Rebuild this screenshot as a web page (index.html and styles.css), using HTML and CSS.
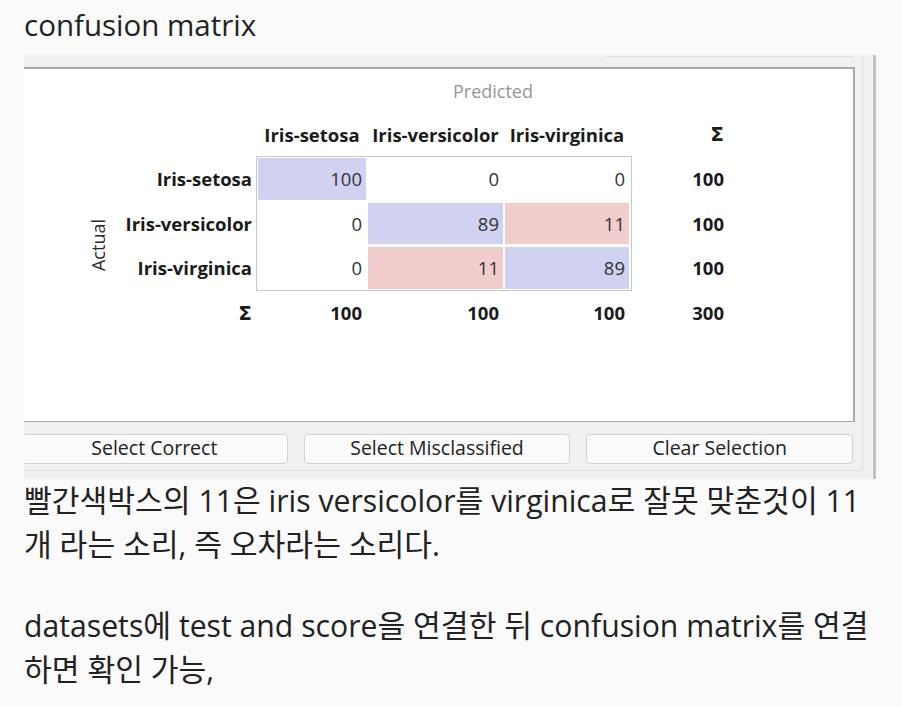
FILE: index.html
```html
<!DOCTYPE html>
<html lang="ko">
<head>
  <meta charset="UTF-8" />
  <meta name="viewport" content="width=device-width, initial-scale=1.0"/>
  <title>confusion matrix</title>
  <link rel="stylesheet" href="styles.css">
</head>
<body>
  <div class="post">
    <p class="post-title">confusion matrix</p>

    <!-- Orange widget screenshot -->
    <div class="shot">
      <div class="frame">
        <div class="shot-top"></div>
        <div class="panel">
          <div class="cm">
            <div class="cm-title">Predicted</div>
            <div class="cm-head">
              <div class="cm-cols">
                <span>Iris-setosa</span>
                <span>Iris-versicolor</span>
                <span>Iris-virginica</span>
              </div>
              <span class="cm-sum sigma">Σ</span>
            </div>
            <div class="cm-main">
              <div class="cm-actual"><span>Actual</span></div>
              <div>
                <div class="cm-body">
                  <div class="cm-rows">
                    <span>Iris-setosa</span>
                    <span>Iris-versicolor</span>
                    <span>Iris-virginica</span>
                  </div>
                  <div class="cm-matrix">
                    <span class="hit">100</span>
                    <span>0</span>
                    <span>0</span>
                    <span>0</span>
                    <span class="hit">89</span>
                    <span class="miss">11</span>
                    <span>0</span>
                    <span class="miss">11</span>
                    <span class="hit">89</span>
                  </div>
                  <div class="cm-totals">
                    <span>100</span>
                    <span>100</span>
                    <span>100</span>
                  </div>
                </div>
                <div class="cm-foot">
                  <span class="cm-label sigma">Σ</span>
                  <div class="cm-cols">
                    <span>100</span>
                    <span>100</span>
                    <span>100</span>
                  </div>
                  <span class="cm-sum">300</span>
                </div>
              </div>
            </div>
          </div>
        </div>
        <div class="btn-row">
          <button>Select Correct</button>
          <button>Select Misclassified</button>
          <button>Clear Selection</button>
        </div>
      </div>
    </div>

    <p class="post-text">빨간색박스의 11은 iris versicolor를 virginica로 잘못 맞춘것이 11개 라는 소리, 즉 오차라는 소리다.</p>
    <p class="post-text">datasets에 test and score을 연결한 뒤 confusion matrix를 연결하면 확인 가능,</p>
  </div>
</body>
</html>
```

FILE: styles.css
```css
body {
  margin: 0;
  background: #fafafa;
  color: #222;
  font-family: "Open Sans", "Noto Sans CJK KR", sans-serif;
}
.post {
  padding: 0 24px;
}
.post-title {
  margin: 3px 0 8px;
  font-size: 29.5px;
  line-height: 44px;
}
.post-text {
  width: 850px;
  margin: 0 0 37px;
  font-size: 30.2px;
  line-height: 44px;
}

/* screenshot of the widget */
.shot {
  width: 839px;
  background: #f0f0f0;
  border-right: 3px solid #c2c2c2;
  padding: 0 10px 8px 0;
  overflow: hidden;
  font-size: 18.5px;
}
.frame {
  border-right: 1px solid #dedede;
  border-bottom: 1px solid #dedede;
  padding: 0 7px 6px 0;
}
.shot-top {
  height: 11px;
}
.shot-top::before {
  content: "";
  display: block;
  height: 1px;
  width: 246px;
  margin: 1px 0 0 583px;
  background: #dcdcdc;
}
.panel {
  background: #fff;
  border-top: 2px solid #a9a9a9;
  border-right: 2px solid #a9a9a9;
  border-bottom: 1px solid #a9a9a9;
  height: 352px;
}
.btn-row {
  display: flex;
  gap: 16px;
  margin: 12px 2px 0 -3px;
}
.btn-row button {
  flex: 1;
  height: 30px;
  background: #fafafa;
  border: 1px solid #d2d2d2;
  border-radius: 4px;
  font: inherit;
  font-size: 19.5px;
  line-height: 26px;
  color: #222;
  padding: 0 0 2px;
}

/* confusion matrix */
.cm {
  margin-left: 62px;
  padding-top: 12px;
  color: #1a1a1a;
}
.cm-title {
  margin-left: 170px;
  width: 474px;
  text-align: center;
  line-height: 20px;
  font-size: 18px;
  color: #969696;
}
.cm-head {
  display: flex;
  align-items: center;
  height: 42px;
  margin: 13px 0 0 170px;
  font-weight: bold;
}
.cm-head span {
  position: relative;
  top: -1px;
}
.cm-cols {
  display: grid;
  grid-template-columns: 108px 135px 124px;
  column-gap: 2px;
  width: 376px;
  padding: 0 3px 0 2px;
  box-sizing: border-box;
}
.cm-head .cm-cols span {
  text-align: center;
  white-space: nowrap;
}
.cm-sum {
  width: 98px;
  text-align: right;
  padding-right: 6px;
  box-sizing: border-box;
}
.sigma {
  font-family: "DejaVu Sans", sans-serif;
  font-size: 20px;
}
.cm-main {
  display: flex;
}
.cm-actual {
  width: 24px;
  display: flex;
  align-items: center;
  justify-content: center;
  color: #2a2a2a;
  font-size: 18px;
}
.cm-actual span {
  writing-mode: vertical-rl;
  transform: rotate(180deg);
}
.cm-body {
  display: flex;
}
.cm-rows,
.cm-totals {
  display: grid;
  grid-template-rows: repeat(3, 41.5px);
  row-gap: 3px;
  padding: 2px 0;
  align-items: center;
  font-weight: bold;
}
.cm-rows {
  width: 146px;
  padding-right: 4px;
  box-sizing: border-box;
  text-align: right;
}
.cm-totals {
  width: 98px;
  padding-right: 6px;
  box-sizing: border-box;
  text-align: right;
}
.cm-matrix {
  display: grid;
  grid-template-columns: 108px 135px 124px;
  grid-auto-rows: 41.5px;
  gap: 3px 2px;
  padding: 1px 2px 1px 1px;
  border: 1px solid #c8c8c8;
  color: #333;
}
.cm-matrix span {
  display: flex;
  align-items: center;
  justify-content: flex-end;
  padding-right: 4px;
}
.cm-matrix .hit {
  background: #d1d1f2;
}
.cm-matrix .miss {
  background: #f2cdcd;
}
.cm-foot {
  display: flex;
  align-items: center;
  height: 44px;
  font-weight: bold;
}
.cm-label {
  width: 146px;
  padding-right: 4px;
  box-sizing: border-box;
  text-align: right;
}
.cm-foot .cm-cols span {
  text-align: right;
  padding-right: 4px;
}
```
